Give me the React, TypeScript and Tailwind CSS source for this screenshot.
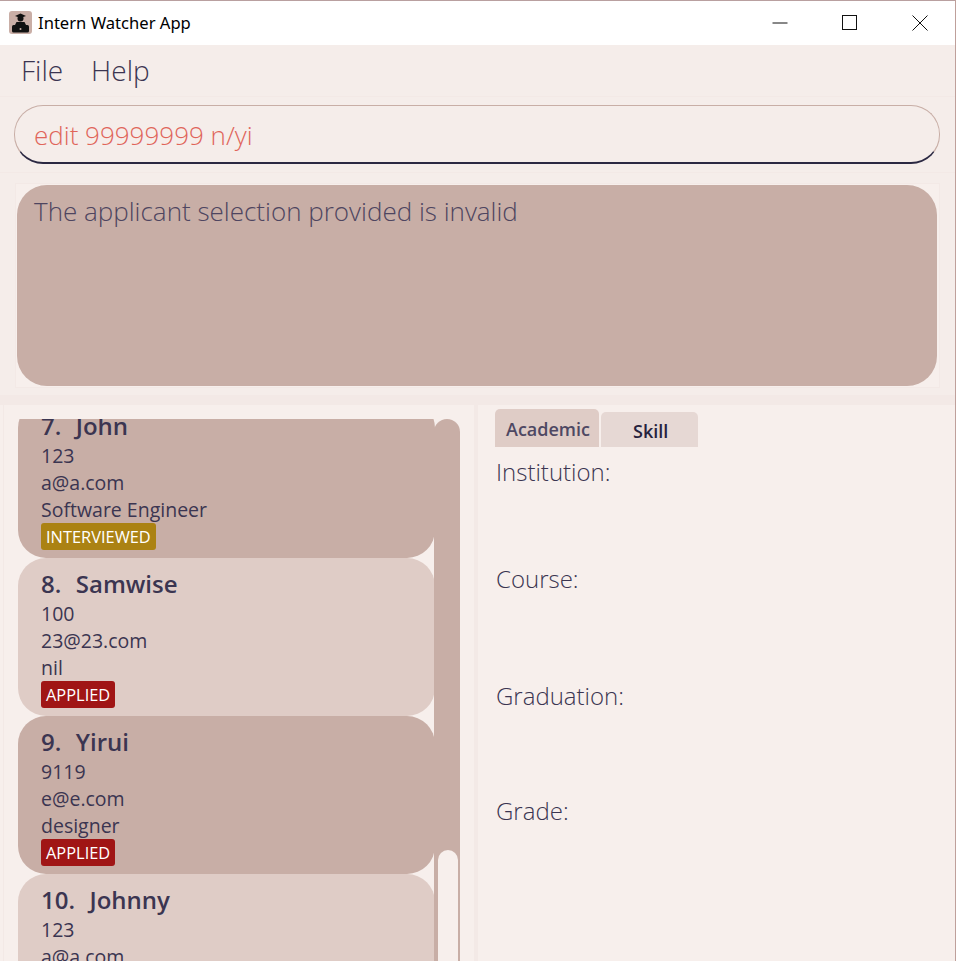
const CARDS = [
  { n: '7.  John', phone: '123', email: 'a@a.com', role: 'Software Engineer', tag: 'INTERVIEWED', dark: true },
  { n: '8.  Samwise', phone: '100', email: '23@23.com', role: 'nil', tag: 'APPLIED', dark: false },
  { n: '9.  Yirui', phone: '9119', email: 'e@e.com', role: 'designer', tag: 'APPLIED', dark: true },
  { n: '10.  Johnny', phone: '123', email: 'a@a.com', role: 'Software Engineer', tag: 'INTERVIEWED', dark: false },
];

function AppIcon() {
  return (
    <svg width="23" height="23" viewBox="0 0 23 23" className="shrink-0">
      <rect width="23" height="23" rx="3" fill="#c9aea6" />
      <path d="M6 5 L11.5 2.5 L17 5 L11.5 7 Z" fill="#111" />
      <circle cx="11.5" cy="7.5" r="3" fill="#111" />
      <path d="M7.5 11 h8 l2 4 h-12 Z" fill="#111" />
      <rect x="3" y="14" width="17" height="7.5" rx="1.5" fill="#111" />
      <circle cx="11.5" cy="18" r="1" fill="#c9aea6" />
    </svg>
  );
}

function Card({ card }: { card: (typeof CARDS)[number] }) {
  return (
    <div className={`h-[158px] shrink-0 rounded-[28px] pl-[23px] pt-[10px] ${card.dark ? 'bg-[#c8aea6]' : 'bg-[#dfccc6]'}`}>
      <div className="text-[24px] font-semibold leading-[32px] whitespace-pre [word-spacing:1px]">{card.n}</div>
      <div className="text-[19.5px] leading-[27px]">{card.phone}</div>
      <div className="text-[19.5px] leading-[27px]">{card.email}</div>
      <div className="text-[19.5px] leading-[27px]">{card.role}</div>
      <span className={`block w-fit h-[27px] rounded-[3px] px-[5px] text-[16.4px] leading-[27px] text-white ${card.tag === 'APPLIED' ? 'bg-[#a01515]' : 'bg-[#ab8213]'}`}>
        {card.tag}
      </span>
    </div>
  );
}

export default function App() {
  return (
    <div className="h-[961px] w-[956px] overflow-hidden bg-[#f5edea] text-[#3b3551] border-r border-[#bfa09b]" style={{ fontFamily: '"Open Sans", sans-serif' }}>
      {/* title bar */}
      <div className="h-[45px] bg-white border-t border-[#b9a0a0] flex items-center text-black">
        <div className="ml-[9px] flex items-center gap-[6px]">
          <AppIcon />
          <span className="text-[16.6px] pt-[1px]" style={{ fontFamily: '"Noto Sans", sans-serif' }}>Intern Watcher App</span>
        </div>
        <div className="ml-auto flex items-center">
          <svg width="16" height="16" viewBox="0 0 16 16" className="mr-[54px]"><path d="M0.5 8 H15.5" stroke="#111" strokeWidth="1" /></svg>
          <svg width="16" height="16" viewBox="0 0 16 16" className="mr-[54px]"><rect x="0.5" y="0.5" width="14" height="14" fill="none" stroke="#111" strokeWidth="1" /></svg>
          <svg width="16" height="16" viewBox="0 0 16 16" className="mr-[27px]"><path d="M0.5 0.5 L15.5 15.5 M15.5 0.5 L0.5 15.5" stroke="#111" strokeWidth="1" /></svg>
        </div>
      </div>

      {/* menu */}
      <div className="h-[52px] flex items-center gap-[28px] pl-[21px] pb-[2px] text-[28px] font-light border-b border-[#f3e9e6]">
        <span>File</span>
        <span>Help</span>
      </div>

      {/* command box */}
      <div className="h-[76px] pt-[8px] pl-[14px] border-b border-[#f3e9e6]">
        <div className="h-[59px] w-[926px] rounded-[29px] border border-[#c8aea6] border-b-2 border-b-[#2b2842] pl-[19px] text-[26px] font-light leading-[58px] text-[#e0655a]">
          edit 99999999 n/yi
        </div>
      </div>

      {/* result box */}
      <div className="h-[232px] pt-[10px] pl-[15px] border-b-[10px] border-[#f3e9e6]">
        <div className="h-[205px] w-[925px] border border-[#f3e9e6] bg-[#f7efec] p-px">
          <div className="h-[201px] w-[920px] rounded-[30px] bg-[#c8aea6] pl-[17px] pt-[7px] text-[26px] font-light leading-[38px] text-[#4e4560]">
            The applicant selection provided is invalid
          </div>
        </div>
      </div>

      {/* lower panes */}
      <div className="flex h-[556px] bg-[#f7efec]">
        <div className="ml-[3px] w-[475px] shrink-0 border-l border-r-4 border-[#f3e9e6] pl-[14px] pt-[14px] flex items-start">
          <div className="w-[417px] h-[542px] overflow-hidden shrink-0">
            <div className="-mt-[19px] flex flex-col">
              {CARDS.map((c) => <Card key={c.n} card={c} />)}
            </div>
          </div>
          <div className="-ml-px w-[26px] h-[542px] rounded-t-[13px] bg-[#c8aea6] pl-[4px] pt-[431px]">
            <div className="w-[20px] h-[200px] rounded-t-[10px] bg-[#f7efec]" />
          </div>
        </div>

        <div className="pl-[17px] pt-[7px] flex-1">
          <div className="flex items-end gap-[2px] h-[35px] text-[18px] font-semibold">
            <div className="h-[38px] -mt-[3px] w-[104px] rounded-t-[5px] bg-[#dfccc6] text-[#4e4863] pl-[11px] leading-[40px]">Academic</div>
            <div className="h-[35px] w-[97px] rounded-t-[5px] bg-[#e6d8d4] text-[#26223d] pl-[32px] leading-[38px]">Skill</div>
          </div>
          <div className="font-light text-[24px] leading-[32px] pl-[1px]">
            <div className="mt-[9px]">Institution:</div>
            <div className="mt-[75px]">Course:</div>
            <div className="mt-[85px]">Graduation:</div>
            <div className="mt-[83px]">Grade:</div>
          </div>
        </div>
      </div>
    </div>
  );
}
